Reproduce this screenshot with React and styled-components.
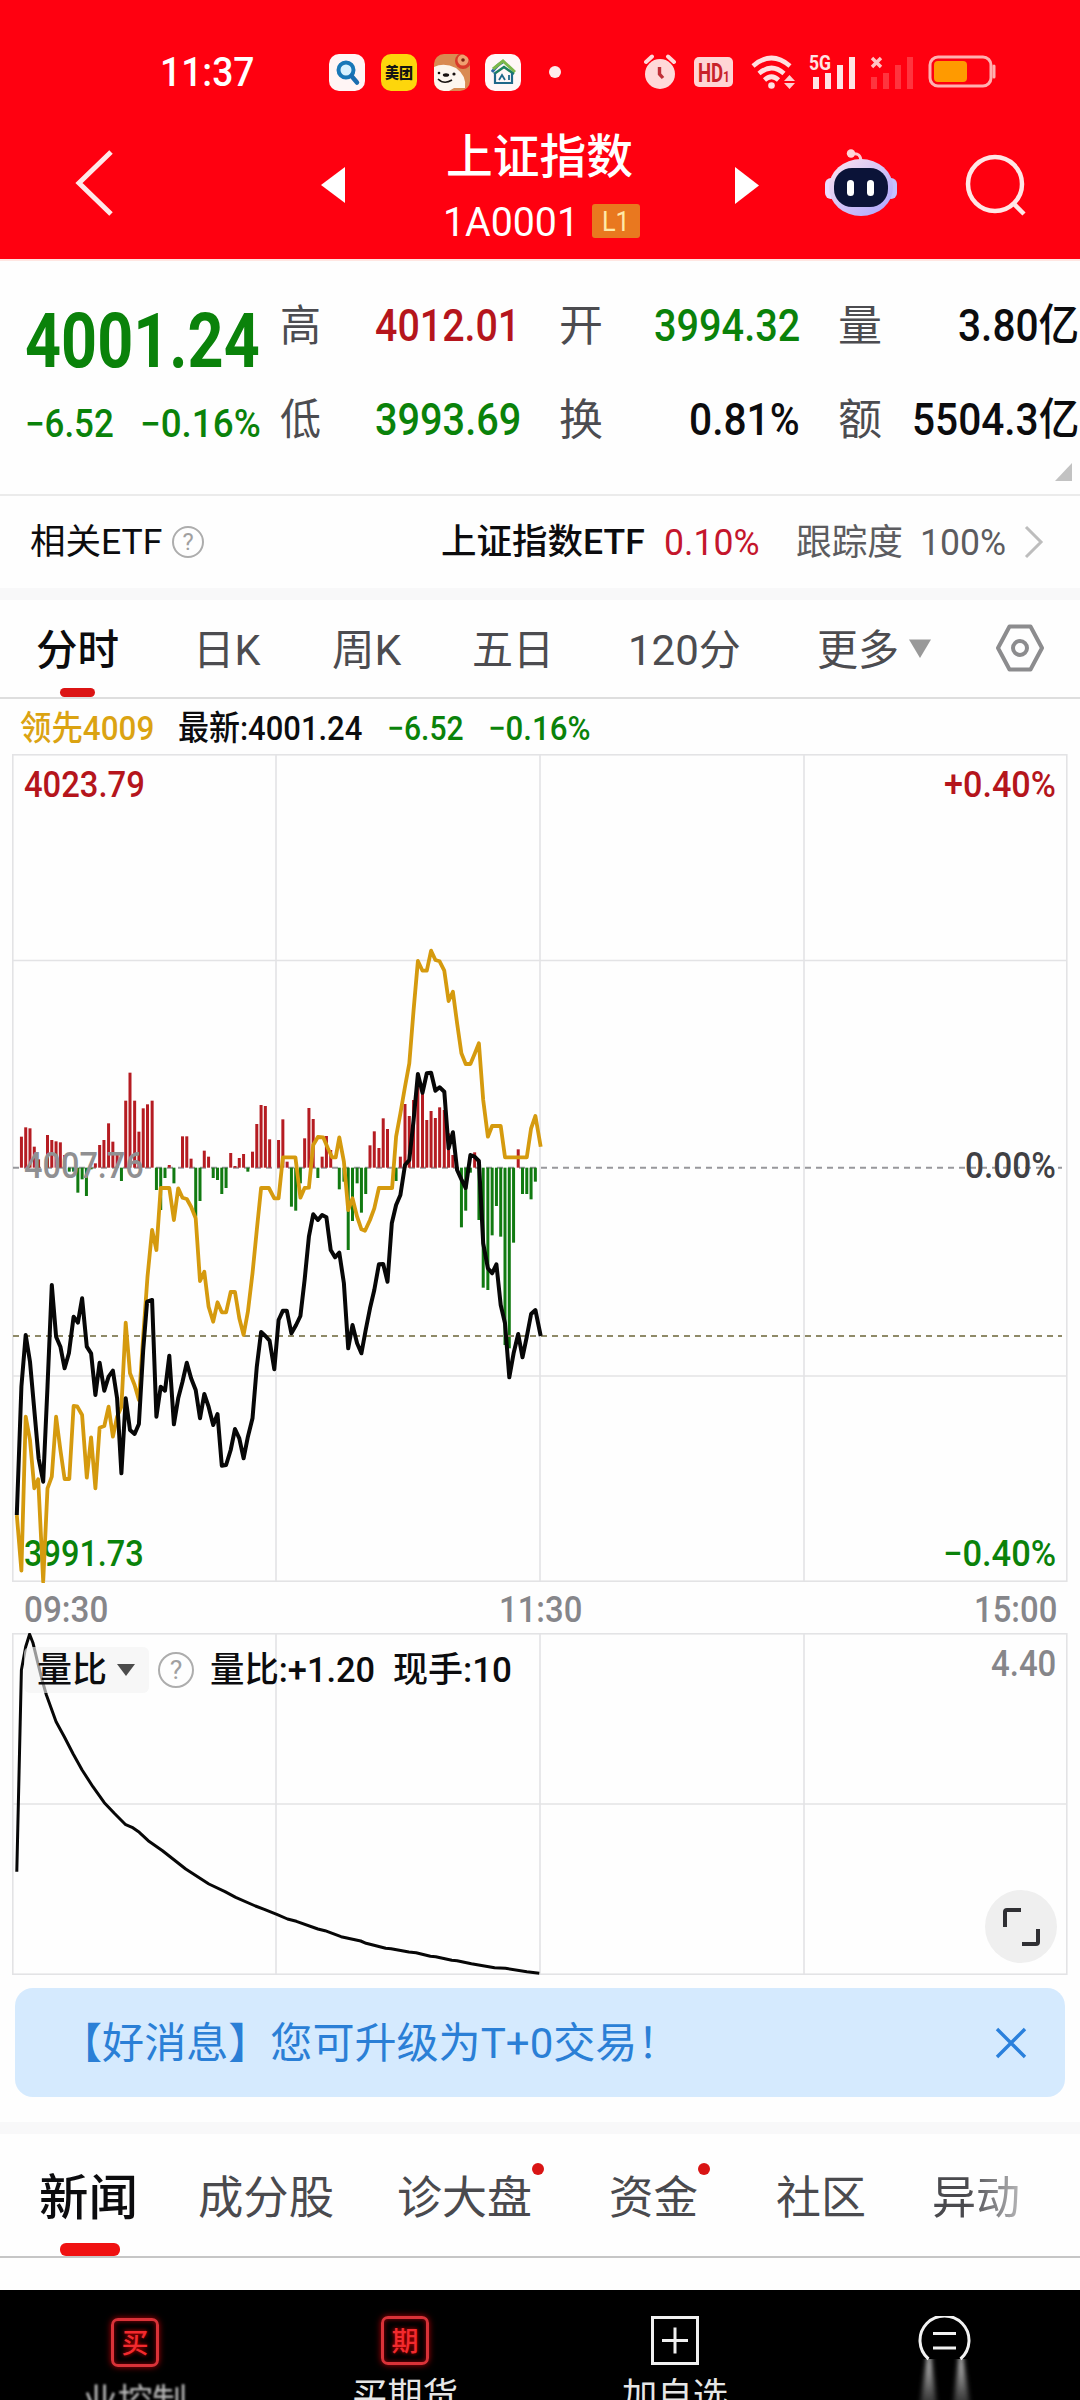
import React, { useLayoutEffect, useRef, useState } from "react";
import styled, { createGlobalStyle } from "styled-components";

const GlobalStyle = createGlobalStyle`
  html, body { margin: 0; padding: 0; background: #fff; }
  * { box-sizing: border-box; }
`;

const RED = "#b5151c";
const GREEN = "#0a820a";
const GRAY = "#86868a";

const Screen = styled.div`
  width: 1080px;
  height: 2400px;
  overflow: hidden;
  display: flex;
  flex-direction: column;
  background: #fefefe;
  color: #0c0c0e;
  font-family: Roboto, "Noto Sans CJK SC", sans-serif;
`;

/* Condensed text: the glyph run is narrowed or widened to fill its column. */
const FitBox = styled.span`
  display: block;
  flex: none;
  width: ${(p) => p.$w}px;
  height: ${(p) => p.$lh}px;
  line-height: ${(p) => p.$lh}px;
  font-size: ${(p) => p.$size}px;
  font-weight: ${(p) => p.$weight};
  color: ${(p) => p.$color || "inherit"};
  margin-left: ${(p) => p.$ml || 0}px;
  margin-top: ${(p) => p.$mt || 0}px;
  white-space: nowrap;
`;
const FitRun = styled.span`
  display: inline-block;
  transform-origin: 0 50%;
`;
function Fit({ w, size, lh, weight = 400, color, ml, mt, children }) {
  const ref = useRef(null);
  const [scale, setScale] = useState(1);
  useLayoutEffect(() => {
    const natural = ref.current.offsetWidth;
    if (natural) setScale(w / natural);
  }, [w, size, children]);
  return (
    <FitBox $w={w} $size={size} $lh={lh || Math.round(size * 1.2)} $weight={weight} $color={color} $ml={ml} $mt={mt}>
      <FitRun ref={ref} style={{ transform: `translateY(1px) scaleX(${scale})` }}>{children}</FitRun>
    </FitBox>
  );
}

/* ---------- header ---------- */
const Header = styled.header`
  flex: none;
  height: 259px;
  background: #ff0010;
  color: #fff;
`;
const StatusBar = styled.div`
  height: 124px;
  padding: 20px 0 0 160px;
  display: flex;
  align-items: center;
`;
const AppTile = styled.span`
  flex: none;
  width: 36px;
  height: 37px;
  margin-left: ${(p) => p.$ml}px;
  border-radius: 10px;
  overflow: hidden;
  background: ${(p) => p.$bg};
  display: flex;
  align-items: center;
  justify-content: center;
  color: #141414;
`;
const MoreDot = styled.span`
  width: 12px;
  height: 12px;
  margin-left: 28px;
  border-radius: 50%;
  background: #ffecec;
`;
const StatusGlyph = styled.svg`
  flex: none;
  margin-left: ${(p) => p.$ml}px;
`;
const HdBadge = styled.span`
  flex: none;
  width: 39px;
  height: 30px;
  margin-left: 18px;
  border-radius: 5px;
  background: #ffd5d5;
  color: #c8222a;
  display: flex;
  align-items: center;
  justify-content: center;
`;
const TitleBar = styled.div`
  height: 135px;
  display: flex;
`;
const NavSlot = styled.div`
  flex: none;
  width: ${(p) => p.$w}px;
  padding: ${(p) => p.$pt}px 0 0 ${(p) => p.$pl}px;
`;
const TitleBlock = styled.div`
  width: 290px;
  padding-left: 1px;
`;
const CodeRow = styled.div`
  display: flex;
  align-items: center;
  margin-top: -1px;
`;
const LevelBadge = styled.span`
  width: 48px;
  height: 34px;
  margin-left: 13px;
  border-radius: 3px;
  background: #e9781f;
  color: #ffe9a8;
  display: flex;
  align-items: center;
  justify-content: center;
`;

/* ---------- quote ---------- */
const Quote = styled.section`
  flex: none;
  height: 237px;
  border-bottom: 2px solid #ebebeb;
  border-top: 2px solid #ffe6e2;
  display: flex;
`;
const PriceCol = styled.div`
  flex: none;
  width: 280px;
  padding: 38px 0 0 25px;
`;
const ChangeRow = styled.div`
  display: flex;
  margin-top: 13px;
`;
const StatGrid = styled.div`
  flex: none;
  width: 800px;
  padding-top: 35px;
`;
const StatRow = styled.div`
  display: flex;
  align-items: center;
  height: 58px;
  margin-bottom: 36px;
`;
const Stat = styled.div`
  flex: none;
  display: flex;
  justify-content: space-between;
  align-items: center;
  width: ${(p) => p.$w}px;
  margin-right: ${(p) => p.$mr || 0}px;
`;
const Corner = styled.svg`
  display: block;
  margin: -21px 0 0 775px;
`;

const EtfRow = styled.section`
  flex: none;
  height: 92px;
  display: flex;
  align-items: center;
  padding-left: 30px;
`;
const Help = styled.span`
  flex: none;
  width: ${(p) => p.$d}px;
  height: ${(p) => p.$d}px;
  margin-left: ${(p) => p.$ml}px;
  border: 2px solid #adadad;
  border-radius: 50%;
  color: #a0a0a0;
  font-size: ${(p) => p.$d * 0.74}px;
  display: flex;
  align-items: center;
  justify-content: center;
`;
const Band = styled.div`
  flex: none;
  height: 12px;
  background: #f8f8f9;
`;

/* ---------- period tabs ---------- */
const PeriodTabs = styled.nav`
  flex: none;
  height: 99px;
  padding-left: 36px;
  border-bottom: 2px solid #dedede;
  display: flex;
`;
const Tab = styled.div`
  flex: none;
  position: relative;
  margin-left: ${(p) => p.$ml || 0}px;
  padding-top: ${(p) => p.$pt}px;
  display: flex;
  align-items: flex-start;
  -webkit-mask-image: ${(p) => (p.$fade ? "linear-gradient(90deg,#000 40%,rgba(0,0,0,.4))" : "none")};
`;
const Underline = styled.span`
  position: absolute;
  left: ${(p) => p.$l}px;
  bottom: 0;
  width: ${(p) => p.$w}px;
  height: ${(p) => p.$h}px;
  border-radius: 6px;
  background: ${(p) => p.$c};
`;
const NewDot = styled.span`
  position: absolute;
  top: ${(p) => p.$t}px;
  right: -12px;
  width: 12px;
  height: 12px;
  border-radius: 50%;
  background: #d91414;
`;

/* ---------- chart ---------- */
const Legend = styled.div`
  flex: none;
  height: 55px;
  padding: 1px 0 0 20px;
  display: flex;
  align-items: center;
`;
const ChartBox = styled.div`
  flex: none;
  position: relative;
  width: 1080px;
  height: ${(p) => p.$h}px;
  svg { display: block; }
`;
const Label = styled.div`
  position: absolute;
  left: ${(p) => p.$l}px;
  top: ${(p) => p.$t}px;
`;
const TimeAxis = styled.div`
  flex: none;
  height: 50px;
  padding: 1px 0 0 24px;
  display: flex;
  align-items: center;
`;
const SubHead = styled.div`
  position: absolute;
  left: 24px;
  top: 14px;
  display: flex;
  align-items: center;
`;
const Picker = styled.span`
  width: 125px;
  height: 46px;
  padding-left: 13px;
  border-radius: 6px;
  background: rgba(242, 242, 242, 0.62);
  display: flex;
  align-items: center;
`;
const Expand = styled.span`
  position: absolute;
  left: 985px;
  top: 257px;
  width: 72px;
  height: 73px;
  border-radius: 50%;
  background: #efefef;
  display: flex;
  align-items: center;
  justify-content: center;
`;

/* ---------- lower part ---------- */
const Banner = styled.section`
  flex: none;
  height: 109px;
  margin: 13px 15px 25px 15px;
  padding-left: 45px;
  border-radius: 18px;
  background: #d5eafe;
  color: #2a7fd6;
  display: flex;
  align-items: center;
`;
const NewsTabs = styled.nav`
  flex: none;
  height: 124px;
  padding-left: 39px;
  border-bottom: 2px solid #c6c6c6;
  display: flex;
`;
const Filler = styled.div`
  flex: none;
  height: 32px;
`;
const BottomBar = styled.footer`
  flex: 1;
  background: #000;
  color: #e6e6e6;
  display: flex;
`;
const BottomItem = styled.div`
  flex: none;
  width: 270px;
  padding-top: 26px;
  display: flex;
  flex-direction: column;
  align-items: center;
`;
const NeonBox = styled.span`
  width: 48px;
  height: 49px;
  border: 3px solid #d93238;
  border-radius: 7px;
  box-shadow: 0 0 6px #b00008, inset 0 0 5px #900008;
  color: #f22a2e;
  text-shadow: 0 0 4px #d00;
  display: flex;
  align-items: center;
  justify-content: center;
  position: relative;
  top: ${(p) => p.$dy || 0}px;
`;
const Smudge = styled.div`
  opacity: 0.8;
  margin-top: 12px;
  filter: blur(1.2px);
`;

/* ---------- series ---------- */
const ux = (u) => u / 2.8;
const line = (pts, dy) => pts.map(([u, v]) => `${ux(u).toFixed(1)},${(v / 3 + dy).toFixed(1)}`).join(" ");

const PRICE = [[47,1845],[60,1460],[72,1305],[84,1385],[96,1530],[108,1675],[121,1745],[133,1460],[145,1155],[157,1310],[169,1340],[181,1405],[193,1360],[206,1250],[218,1268],[230,1195],[243,1340],[255,1360],[267,1485],[279,1388],[292,1472],[304,1430],[316,1412],[328,1495],[340,1720],[352,1495],[364,1590],[377,1602],[389,1572],[401,1350],[412,1205],[426,1200],[438,1550],[450,1460],[462,1472],[474,1367],[487,1573],[499,1495],[511,1445],[523,1388],[535,1435],[548,1470],[560,1555],[572,1482],[584,1520],[597,1575],[609,1542],[621,1697],[633,1695],[646,1650],[658,1587],[670,1615],[682,1675],[694,1610],[707,1555],[719,1400],[731,1296],[743,1308],[755,1322],[768,1408],[780,1260],[792,1232],[803,1232],[816,1300],[829,1275],[841,1248],[853,1140],[865,1010],[877,943],[890,960],[902,945],[914,952],[926,1050],[938,1072],[950,1058],[963,1150],[975,1345],[987,1275],[1000,1330],[1012,1360],[1024,1290],[1036,1225],[1048,1170],[1061,1093],[1073,1092],[1085,1145],[1097,970],[1109,915],[1121,885],[1134,795],[1146,780],[1158,660],[1170,522],[1183,578],[1195,520],[1207,518],[1219,572],[1231,562],[1244,575],[1256,745],[1268,697],[1280,810],[1292,838],[1304,864],[1317,765],[1329,770],[1341,783],[1353,1030],[1366,1105],[1378,1120],[1390,1093],[1402,1215],[1414,1270],[1426,1432],[1438,1360],[1451,1302],[1463,1372],[1475,1310],[1487,1242],[1499,1230],[1514,1308]];

const LEAD = [[47,1845],[60,2012],[72,1550],[84,1620],[96,1765],[107,1738],[121,2045],[133,1765],[145,1730],[157,1550],[169,1650],[181,1737],[194,1737],[206,1518],[216,1519],[230,1545],[243,1733],[255,1612],[267,1765],[279,1583],[292,1578],[304,1520],[316,1610],[328,1550],[340,1520],[352,1268],[364,1420],[377,1455],[389,1500],[401,1310],[413,1130],[426,990],[438,1050],[450,864],[474,864],[487,960],[499,865],[511,893],[523,897],[535,920],[548,955],[560,1143],[572,1115],[584,1220],[597,1265],[609,1207],[621,1237],[633,1237],[646,1176],[658,1176],[670,1255],[682,1305],[694,1235],[707,1120],[719,990],[731,864],[753,864],[768,895],[780,895],[792,772],[827,772],[841,893],[853,864],[865,863],[877,735],[890,711],[905,712],[918,745],[930,772],[940,772],[950,712],[963,785],[975,930],[987,895],[1000,950],[1012,988],[1022,992],[1036,960],[1048,925],[1061,864],[1098,864],[1109,710],[1121,640],[1134,560],[1146,490],[1158,330],[1170,183],[1183,212],[1195,212],[1207,152],[1219,180],[1231,184],[1244,212],[1256,303],[1268,275],[1280,370],[1292,460],[1304,492],[1317,492],[1329,462],[1341,430],[1353,600],[1366,710],[1378,678],[1402,678],[1414,772],[1475,772],[1487,685],[1499,648],[1514,740]];

const BARS = [[60,710],[72,682],[84,685],[96,740],[108,778],[133,705],[145,720],[157,724],[169,727],[181,765],[194,815],[206,815],[218,878],[230,838],[242,888],[255,808],[267,790],[279,735],[291,720],[304,670],[316,725],[328,765],[340,843],[352,602],[364,518],[377,602],[389,695],[401,625],[413,613],[426,602],[438,870],[450,930],[462,834],[474,795],[487,850],[511,709],[523,709],[535,776],[548,950],[560,903],[572,752],[584,770],[597,834],[609,840],[621,882],[633,864],[646,759],[658,798],[670,774],[682,762],[694,815],[707,755],[719,672],[731,615],[743,618],[755,718],[780,720],[792,658],[804,785],[816,920],[828,932],[841,850],[853,715],[865,624],[877,657],[890,834],[902,770],[914,708],[926,750],[950,868],[963,845],[975,1050],[987,963],[1000,850],[1012,938],[1024,882],[1036,736],[1048,694],[1061,744],[1073,655],[1085,687],[1109,843],[1121,770],[1134,612],[1146,648],[1158,600],[1170,560],[1183,580],[1195,660],[1207,633],[1219,654],[1231,622],[1244,630],[1256,700],[1268,765],[1280,810],[1292,982],[1304,932],[1317,818],[1329,757],[1341,960],[1353,1163],[1366,1170],[1378,1006],[1390,918],[1402,1010],[1414,1335],[1426,1345],[1438,1028],[1451,748],[1463,882],[1475,882],[1487,898],[1499,845]];

const RATIO = [[47,815],[60,210],[72,140],[83,103],[92,128],[105,185],[118,240],[130,285],[157,365],[180,410],[205,462],[230,510],[260,560],[292,608],[320,640],[352,674],[370,682],[390,697],[415,722],[455,752],[520,807],[585,852],[630,875],[660,892],[715,918],[740,928],[775,943],[805,957],[830,964],[890,987],[910,992],[955,1010],[1010,1023],[1025,1030],[1080,1045],[1095,1046],[1145,1056],[1165,1058],[1205,1069],[1220,1070],[1265,1081],[1280,1082],[1320,1091],[1385,1103],[1415,1105],[1475,1115],[1510,1120]];

function Grid({ rows, h }) {
  return (
    <g stroke="#e3e3e5" strokeWidth="1.6" fill="none">
      <rect x="12.8" y="0.8" width="1054" height={h - 1.6} />
      {[276, 540, 804].map((x) => <path key={x} d={`M${x} 0V${h}`} />)}
      {rows.map((y) => <path key={y} d={`M12 ${y}H1067`} />)}
    </g>
  );
}

const STATS = [
  [["高", "4012.01", 145, RED, 39, 240], ["开", "3994.32", 146, GREEN, 42, 241], ["量", "3.80亿", 121, null, 42, 241]],
  [["低", "3993.69", 146, GREEN, 39, 241], ["换", "0.81%", 111, null, 42, 241], ["额", "5504.3亿", 167, null, 42, 241]],
];

export default function App() {
  return (
    <Screen>
      <GlobalStyle />
      <Header>
        <StatusBar>
          <Fit w={94} size={40} lh={48} weight={500}>11:37</Fit>
          <AppTile $ml={75} $bg="#fff5f5">
            <svg width="36" height="37" viewBox="0 0 36 37" fill="none">
              <circle cx="17" cy="16" r="7.5" fill="#d8f2ff" stroke="#1878b8" strokeWidth="4" />
              <path d="M22.5 22L28 28.5" stroke="#1a6db0" strokeWidth="4.5" strokeLinecap="round" />
            </svg>
          </AppTile>
          <AppTile $ml={16} $bg="#fdd60c"><Fit w={28} size={15} lh={36} weight={900}>美团</Fit></AppTile>
          <AppTile $ml={17} $bg="#d98a52">
            <svg width="36" height="37" viewBox="0 0 36 37">
              <path d="M0 13Q10 8 22 14Q33 22 31 34L20 34L15 37H0Z" fill="#fdf6ee" />
              <circle cx="29" cy="7" r="8" fill="#d93a2a" />
              <circle cx="29" cy="6" r="5.5" fill="#f0a070" />
              <circle cx="29" cy="6" r="1.8" fill="#7a2010" />
              <ellipse cx="12" cy="21" rx="3.2" ry="1.8" fill="#181210" />
              <circle cx="5" cy="19" r="1.3" fill="#181210" />
              <circle cx="20" cy="20" r="1.6" fill="#181210" />
              <path d="M4 25Q10 31 18 26" stroke="#181210" strokeWidth="1.6" fill="none" />
            </svg>
          </AppTile>
          <AppTile $ml={15} $bg="#fff7f7">
            <svg width="36" height="37" viewBox="0 0 36 37" fill="none">
              <path d="M7 18Q13 10 18 8" stroke="#2c66a8" strokeWidth="3" />
              <path d="M8 15L18 7L30 18" stroke="#7cb84a" strokeWidth="3" />
              <path d="M9 20L19 13L29 20" stroke="#1b8060" strokeWidth="2.5" />
              <path d="M10 19V29H27V19" stroke="#20688a" strokeWidth="2.2" />
              <path d="M14 26L17 21L20 26M24 21V26" stroke="#20688a" strokeWidth="1.8" />
            </svg>
          </AppTile>
          <MoreDot />
          <StatusGlyph $ml={83} width="32" height="36" viewBox="0 0 32 36">
            <circle cx="16" cy="20" r="15" fill="#ffd9d9" />
            <path d="M2 8L8 2.5M30 8L24 2.5" stroke="#ffd9d9" strokeWidth="4" strokeLinecap="round" />
            <path d="M15.5 13V20L19 24" stroke="#c03038" strokeWidth="3.4" fill="none" />
          </StatusGlyph>
          <HdBadge>
            <Fit w={25} size={26} lh={30} weight={700}>HD</Fit>
            <Fit w={7} size={15} lh={30} weight={700} mt={7}>1</Fit>
          </HdBadge>
          <StatusGlyph $ml={18} width="44" height="36" viewBox="0 0 44 36" fill="none">
            <path d="M2 12Q20.500 -4 39 12M8 19.500Q20.500 8.500 33 19.500M13.500 26Q20.500 19.500 27.500 26" stroke="#ffe0e0" strokeWidth="4.600" />
            <circle cx="20.500" cy="31.500" r="3.3" fill="#ffe0e0" />
            <path d="M33 27L38.500 21L44 27ZM33 29L38.500 35L44 29Z" fill="#ffd0d0" />
          </StatusGlyph>
          <StatusGlyph $ml={14} width="47" height="36" viewBox="0 0 47 36">
            <path d="M4 23h6v12H4zM16 19h6v16h-6zM28 11h6v24h-6zM40 3h6v32h-6z" fill="#ffe4e4" />
            <text x="0" y="16" fontFamily="Roboto" fontWeight="700" fontSize="20" textLength="22" lengthAdjust="spacingAndGlyphs" fill="#ffe4e4">5G</text>
          </StatusGlyph>
          <StatusGlyph $ml={14} width="46" height="36" viewBox="0 0 46 36">
            <path d="M1 23h6v12H1zM13 19h6v16h-6zM25 11h6v24h-6zM37 3h6v32h-6z" fill="#ff343e" />
            <path d="M2 4L11 13M11 4L2 13" stroke="#ffc4c4" strokeWidth="3.4" />
          </StatusGlyph>
          <StatusGlyph $ml={12} width="70" height="34" viewBox="0 0 70 34">
            <rect x="2" y="2" width="61" height="29" rx="8" fill="none" stroke="#ffb0b0" strokeWidth="3" />
            <rect x="6" y="6" width="33" height="21" rx="4" fill="#ff9a00" />
            <path d="M66 11v11" stroke="#ffb0b0" strokeWidth="3" strokeLinecap="round" />
          </StatusGlyph>
        </StatusBar>
        <TitleBar>
          <NavSlot $w={321} $pl={74} $pt={25}>
            <svg width="42" height="68" viewBox="0 0 42 68" fill="none"><path d="M37 3L5 34L37 65" stroke="#ffe9e9" strokeWidth="5" /></svg>
          </NavSlot>
          <NavSlot $w={124} $pl={0} $pt={43}>
            <svg width="24" height="36"><path d="M24 0V36L0 18Z" fill="#fff" /></svg>
          </NavSlot>
          <TitleBlock>
            <Fit w={187} size={47} lh={64} weight={500}>上证指数</Fit>
            <CodeRow>
              <Fit w={136} size={41} lh={68} ml={-3}>1A0001</Fit>
              <LevelBadge><Fit w={28} size={28} lh={34}>L1</Fit></LevelBadge>
            </CodeRow>
          </TitleBlock>
          <NavSlot $w={88} $pl={0} $pt={43}>
            <svg width="24" height="37"><path d="M0 0V37L24 18.500Z" fill="#fff" /></svg>
          </NavSlot>
          <NavSlot $w={139} $pl={1} $pt={24}>
            <svg width="74" height="72" viewBox="0 0 74 72">
              <defs>
                <linearGradient id="shell" x1="0" y1="0" x2="1" y2="1">
                  <stop offset="0" stopColor="#ffe4ee" /><stop offset="1" stopColor="#a9a4ff" />
                </linearGradient>
              </defs>
              <path d="M28 6Q37 4 37 14" stroke="#ffc9cf" strokeWidth="3" fill="none" />
              <circle cx="27" cy="5.500" r="4.200" fill="#ffd5d8" />
              <rect x="1" y="30" width="12" height="21" rx="6" fill="#ecdcff" />
              <rect x="61" y="30" width="12" height="21" rx="6" fill="#c4c0ff" />
              <ellipse cx="37" cy="39.500" rx="32" ry="28.500" fill="url(#shell)" />
              <rect x="10" y="20" width="54" height="39" rx="18" fill="#0b1338" />
              <rect x="23" y="32" width="7" height="16" rx="3.500" fill="#fff" />
              <rect x="43" y="32" width="7" height="16" rx="3.500" fill="#fff" />
            </svg>
          </NavSlot>
          <NavSlot $w={80} $pl={0} $pt={29}>
            <svg width="66" height="66" viewBox="0 0 66 66" fill="none" stroke="#ffe6e6" strokeWidth="4.500">
              <circle cx="33" cy="31" r="27" /><path d="M52 51L62 61" />
            </svg>
          </NavSlot>
        </TitleBar>
      </Header>

      <Quote>
        <PriceCol>
          <Fit w={235} size={76} lh={82} weight={700} color={GREEN}>4001.24</Fit>
          <ChangeRow>
            <Fit w={89} size={38} lh={58} weight={500} color={GREEN}>−6.52</Fit>
            <Fit w={121} size={38} lh={58} weight={500} color={GREEN} ml={26}>−0.16%</Fit>
          </ChangeRow>
        </PriceCol>
        <StatGrid>
          {STATS.map((row, r) => (
            <StatRow key={r}>
              {row.map(([k, v, w, c, kw, sw], i) => (
                <Stat key={k} $w={sw} $mr={i < 2 ? 279 - sw : 0}>
                  <Fit w={kw + 2} size={43} lh={58} color="#4c4c50">{k}</Fit>
                  <Fit w={w} size={44} lh={58} weight={500} color={c}>{v}</Fit>
                </Stat>
              ))}
            </StatRow>
          ))}
          <Corner width="17" height="18"><path d="M17 0V18H0Z" fill="#c2c2c2" /></Corner>
        </StatGrid>
      </Quote>

      <EtfRow>
        <Fit w={132} size={35} lh={50}>相关ETF</Fit>
        <Help $d={32} $ml={10}>?</Help>
        <Fit w={204} size={35} lh={50} weight={500} ml={237}>上证指数ETF</Fit>
        <Fit w={96} size={36} lh={50} color="#c4162c" ml={19}>0.10%</Fit>
        <Fit w={107} size={36} lh={50} color="#5c5c60" ml={36}>跟踪度</Fit>
        <Fit w={86} size={36} lh={50} color="#5c5c60" ml={17}>100%</Fit>
        <StatusGlyph $ml={17} width="22" height="34" viewBox="0 0 22 34"><path d="M3 2L18 17L3 32" fill="none" stroke="#bdbdbd" strokeWidth="3" /></StatusGlyph>
      </EtfRow>
      <Band />

      <PeriodTabs>
        <Tab $pt={22}><Fit w={83} size={42} lh={56} weight={500}>分时</Fit><Underline $l={24} $w={35} $h={9} $c="#dc1414" /></Tab>
        <Tab $pt={22} $ml={74}><Fit w={67} size={42} lh={56} color="#4c4c50">日K</Fit></Tab>
        <Tab $pt={22} $ml={72}><Fit w={69} size={42} lh={56} color="#4c4c50">周K</Fit></Tab>
        <Tab $pt={22} $ml={71}><Fit w={82} size={42} lh={56} color="#4c4c50">五日</Fit></Tab>
        <Tab $pt={22} $ml={74}><Fit w={113} size={42} lh={56} color="#4c4c50">120分</Fit></Tab>
        <Tab $pt={22} $ml={76}>
          <Fit w={82} size={42} lh={56} color="#4c4c50">更多</Fit>
          <StatusGlyph $ml={10} width="22" height="56" viewBox="0 0 22 56"><path d="M0 17.500H22L11 36Z" fill="#999" /></StatusGlyph>
        </Tab>
        <Tab $pt={23} $ml={64}>
          <svg width="50" height="50" viewBox="0 0 50 50" fill="none" stroke="#8c8c8e" strokeWidth="4">
            <path d="M14.500 3.500H35.500L47 25L35.500 46.500H14.500L3 25Z" strokeLinejoin="round" />
            <circle cx="25" cy="25" r="7" />
          </svg>
        </Tab>
      </PeriodTabs>

      <Legend>
        <Fit w={134} size={34} lh={50} weight={500} color="#dba312">领先4009</Fit>
        <Fit w={184} size={34} lh={50} weight={500} ml={24}>最新:4001.24</Fit>
        <Fit w={77} size={34} lh={50} weight={500} color={GREEN} ml={25}>−6.52</Fit>
        <Fit w={103} size={34} lh={50} weight={500} color={GREEN} ml={24}>−0.16%</Fit>
      </Legend>

      <ChartBox $h={829}>
        <svg width="1080" height="829" viewBox="0 0 1080 829">
          <Grid rows={[206.5, 622]} h={828} />
          <path d="M13 413.700H1062" stroke="#98989c" strokeWidth="2" strokeDasharray="6 5" />
          {BARS.map(([u, v]) => (
            <rect key={u} x={ux(u) - 1.5} width="3" y={Math.min(v, 803) / 3 + 146} height={Math.abs(v - 803) / 3} fill={v < 803 ? "#b51c22" : "#117a11"} />
          ))}
          <path d="M13 582H1062" stroke="#8f8a68" strokeWidth="2" strokeDasharray="6 5" />
        </svg>
        <Label $l={24} $t={389}><Fit w={120} size={36} lh={44} weight={500} color="#909092">4007.76</Fit></Label>
        <Label $l={24} $t={777}><Fit w={120} size={36} lh={44} weight={500} color={GREEN}>3991.73</Fit></Label>
        <Label $l={0} $t={0}>
          <svg width="1080" height="829" viewBox="0 0 1080 829" fill="none" strokeLinejoin="round">
            <polyline points={line(LEAD, 146)} stroke="#d59a0e" strokeWidth="3.8" />
            <polyline points={line(PRICE, 146)} stroke="#070707" strokeWidth="4" />
          </svg>
        </Label>
        <Label $l={24} $t={8}><Fit w={121} size={36} lh={44} weight={500} color={RED}>4023.79</Fit></Label>
        <Label $l={944} $t={8}><Fit w={112} size={36} lh={44} weight={500} color={RED}>+0.40%</Fit></Label>
        <Label $l={965} $t={389}><Fit w={91} size={36} lh={44} weight={500} color="#404044">0.00%</Fit></Label>
        <Label $l={943} $t={777}><Fit w={113} size={36} lh={44} weight={500} color={GREEN}>−0.40%</Fit></Label>
      </ChartBox>

      <TimeAxis>
        <Fit w={84} size={36} lh={46} weight={500} color={GRAY}>09:30</Fit>
        <Fit w={83} size={36} lh={46} weight={500} color={GRAY} ml={391}>11:30</Fit>
        <Fit w={83} size={36} lh={46} weight={500} color={GRAY} ml={392}>15:00</Fit>
      </TimeAxis>

      <ChartBox $h={342}>
        <svg width="1080" height="342" viewBox="0 0 1080 342" fill="none">
          <Grid rows={[171]} h={342} />
          <polyline points={line(RATIO, -33)} stroke="#070707" strokeWidth="3" strokeLinejoin="round" />
        </svg>
        <SubHead>
          <Picker>
            <Fit w={70} size={35} lh={46} weight={500}>量比</Fit>
            <StatusGlyph $ml={10} width="18" height="12"><path d="M0 0H18L9 12Z" fill="#4c4c4c" /></StatusGlyph>
          </Picker>
          <Help $d={36} $ml={9}>?</Help>
          <Fit w={165} size={35} lh={46} weight={500} ml={16}>量比:+1.20</Fit>
          <Fit w={119} size={35} lh={46} weight={500} ml={18}>现手:10</Fit>
        </SubHead>
        <Label $l={991} $t={8}><Fit w={65} size={36} lh={44} weight={500} color={GRAY}>4.40</Fit></Label>
        <Expand>
          <svg width="40" height="42" viewBox="0 0 40 42" fill="none" stroke="#303034" strokeWidth="4">
            <path d="M4 21V6Q4 4 6 4H20M37 23V36Q37 38 35 38H21" />
          </svg>
        </Expand>
      </ChartBox>

      <Banner>
        <Fit w={620} size={42} lh={60}>【好消息】您可升级为T+0交易！</Fit>
        <StatusGlyph $ml={315} width="32" height="32" viewBox="0 0 32 32"><path d="M2 2L30 30M30 2L2 30" stroke="#2a80dc" strokeWidth="3.400" /></StatusGlyph>
      </Banner>
      <Band />

      <NewsTabs>
        <Tab $pt={31}><Fit w={99} size={49} lh={66} weight={500}>新闻</Fit><Underline $l={21} $w={60} $h={13} $c="#f01212" /></Tab>
        <Tab $pt={32} $ml={60}><Fit w={136} size={45} lh={64} color="#4a4a4e">成分股</Fit></Tab>
        <Tab $pt={32} $ml={63}><Fit w={135} size={45} lh={64} color="#4a4a4e">诊大盘</Fit><NewDot $t={29} /></Tab>
        <Tab $pt={32} $ml={77}><Fit w={89} size={45} lh={64} color="#4a4a4e">资金</Fit><NewDot $t={29} /></Tab>
        <Tab $pt={32} $ml={78}><Fit w={90} size={45} lh={64} color="#4a4a4e">社区</Fit></Tab>
        <Tab $pt={32} $ml={66} $fade><Fit w={88} size={45} lh={64} color="#4a4a4e">异动</Fit></Tab>
      </NewsTabs>
      <Filler />

      <BottomBar>
        <BottomItem>
          <NeonBox $dy={2}><Fit w={27} size={27} lh={42} weight={500}>买</Fit></NeonBox>
          <Smudge><Fit w={104} size={35} lh={50}>业控制</Fit></Smudge>
        </BottomItem>
        <BottomItem>
          <NeonBox><Fit w={27} size={27} lh={42} weight={500}>期</Fit></NeonBox>
          <Fit w={106} size={35} lh={50} mt={6}>买期货</Fit>
        </BottomItem>
        <BottomItem>
          <svg width="48" height="49" viewBox="0 0 48 49" fill="none" stroke="#f0f0f0" strokeWidth="3">
            <rect x="1.500" y="1.500" width="45" height="46" /><path d="M11 24.500H37M24 11.500V37.500" />
          </svg>
          <Fit w={106} size={35} lh={50} mt={6}>加自选</Fit>
        </BottomItem>
        <BottomItem>
          <svg width="64" height="84" viewBox="0 0 64 84" fill="none">
            <defs>
              <linearGradient id="trail" x1="0" y1="0" x2="0" y2="1">
                <stop offset="0" stopColor="#fff" stopOpacity="0.85" /><stop offset="1" stopColor="#999" stopOpacity="0.4" />
              </linearGradient>
              <filter id="soft" x="-1" y="-0.1" width="3" height="1.2"><feGaussianBlur stdDeviation="2.500 0.500" /></filter>
            </defs>
            <path d="M15.500 43A24.500 24.500 0 1 1 47.500 43" stroke="#f2f2f2" strokeWidth="3" />
            <path d="M20 17.500H43M20 32H43" stroke="#f2f2f2" strokeWidth="3" />
            <path d="M14 43H18L23 84H8Z" fill="url(#trail)" filter="url(#soft)" />
            <path d="M46 43H50L56 84H41Z" fill="url(#trail)" filter="url(#soft)" />
          </svg>
        </BottomItem>
      </BottomBar>
    </Screen>
  );
}
